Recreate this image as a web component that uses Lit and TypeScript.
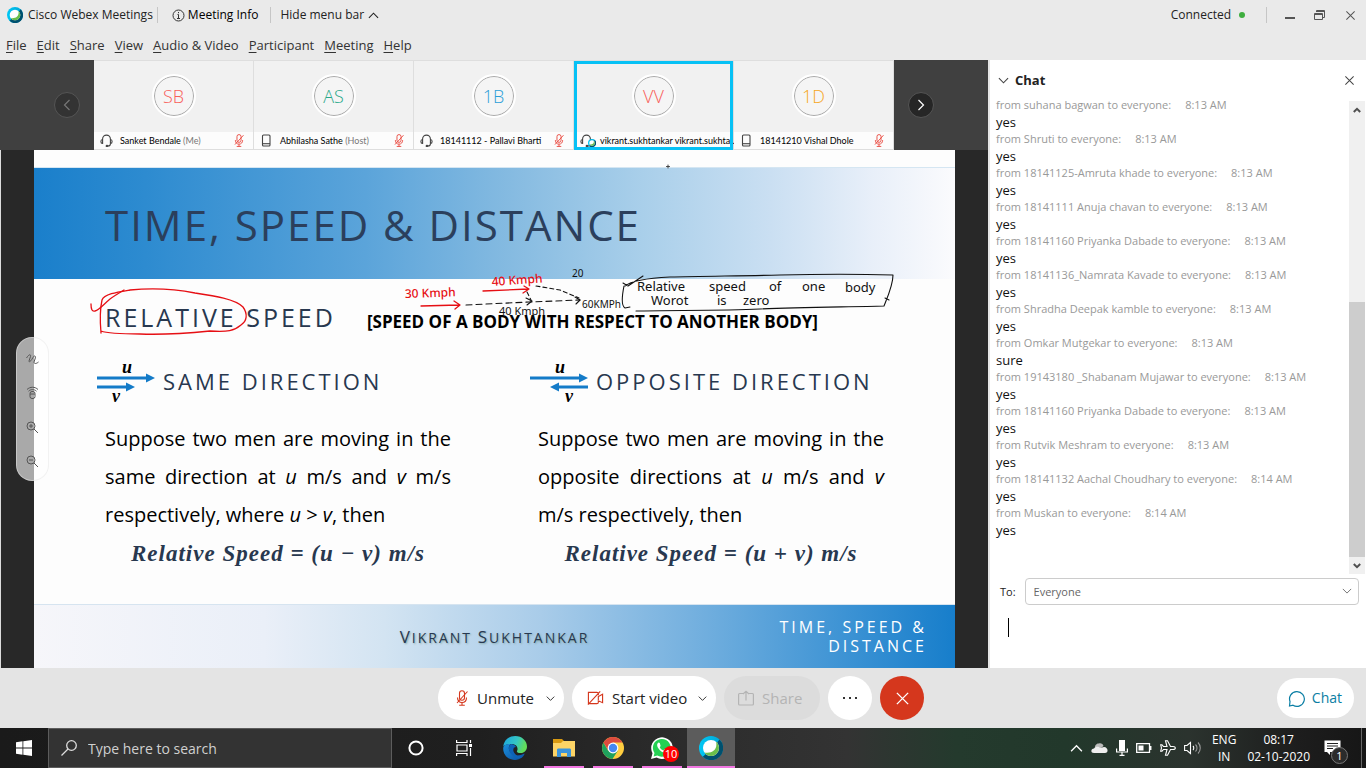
import { LitElement, html, css, svg, nothing } from "lit";
import { customElement, property } from "lit/decorators.js";

const UI = css`"Open Sans", "Noto Sans", sans-serif`;

const base = css`
  * { box-sizing: border-box; }
  button, input, select, textarea {
    font: inherit; color: inherit; background: none; border: 0; padding: 0; margin: 0; outline: 0;
  }
  button { display: flex; align-items: center; white-space: nowrap; }
  svg { display: block; flex: none; }
  p, h1, h2, h3, ul { margin: 0; padding: 0; font-weight: 400; list-style: none; }
`;

const webexLogo = (size: number, id: string) => svg`
  <svg width=${size} height=${size} viewBox="0 0 24 24" aria-hidden="true">
    <defs>
      <linearGradient id="${id}a" x1="0" y1="0" x2="1" y2="0">
        <stop offset="0" stop-color="#00c8f5"/><stop offset="1" stop-color="#00a5d6"/>
      </linearGradient>
      <clipPath id="${id}c"><circle cx="12" cy="12" r="8"/></clipPath>
    </defs>
    <circle cx="12" cy="12" r="12" fill="url(#${id}a)"/>
    <path d="M20.5 3.5A12 12 0 0 1 3.8 20.8L8 17 17.6 7Z" fill="#00506e"/>
    <circle cx="12" cy="12" r="8" fill="#fff"/>
    <g clip-path="url(#${id}c)">
      <path d="M17 5.5C19 14 13 18 5 16.5L8 22 22 22 22 5Z" fill="#6abf4b"/>
    </g>
  </svg>`;

const chevron = (dir: string, w = 12) => {
  const d: Record<string, string> = {
    up: "M1 8.500 6 3.500 11 8.500", down: "M1 3.500 6 8.500 11 3.500",
    left: "M8.500 1 3.500 6 8.500 11", right: "M3.500 1 8.500 6 3.500 11",
  };
  return svg`<svg width=${w} height=${w} viewBox="0 0 12 12" fill="none" stroke="currentColor" stroke-width="1.2" aria-hidden="true"><path d=${d[dir]}/></svg>`;
};

const cross = (w: number) => svg`<svg width=${w} height=${w} viewBox="0 0 12 12" fill="none" stroke="currentColor" stroke-width="1.1" aria-hidden="true"><path d="M1.500 1.500 10.500 10.500M10.500 1.500 1.500 10.500"/></svg>`;

const mutedMic = (w: number, h: number) => svg`
  <svg width=${w} height=${h} viewBox="0 0 12 16" fill="none" stroke="currentColor" stroke-width="1.100" aria-hidden="true">
    <rect x="3.500" y=".7" width="5" height="9.600" rx="2.500"/>
    <path d="M1.500 7.500c0 3 1.700 5 4.500 5s4.500-2 4.500-5M6 12.500V15.300M3.200 15.300H8.800M11.500 1.500 1 13"/>
  </svg>`;

const headset = svg`
  <svg width="13" height="13" viewBox="0 0 13 13" fill="none" stroke="#444" stroke-width="1.1" aria-hidden="true">
    <path d="M2.600 6V5a3.900 3.900 0 0 1 7.800 0v5c0 1.400-1 2-2.500 2M2.600 5.500C.3 5.500.3 9.500 2.600 9.500ZM10.400 5.500c2.300 0 2.300 4 0 4"/>
    <circle cx="7" cy="12" r=".8" fill="#444"/>
  </svg>`;

const phone = svg`
  <svg width="13" height="13" viewBox="0 0 13 13" fill="none" stroke="#444" stroke-width="1.1" aria-hidden="true">
    <rect x="2.500" y="1" width="7.500" height="11" rx="1"/><path d="M2.500 9.700H10"/>
  </svg>`;

@customElement("title-bar")
class TitleBar extends LitElement {
  static styles = [base, css`
    :host { display: block; background: #eaeaea; font: 12px/30px ${UI}; color: #222; }
    .bar { display: flex; align-items: center; height: 30px; }
    .brand { display: flex; align-items: center; gap: 5px; padding: 0 4px 0 7px; }
    .rule { width: 1px; height: 16px; background: #c6c6c6; }
    .info { gap: 3px; margin: 0 12px 0 14px; color: #000; }
    .hide { gap: 4px; margin-left: 9px; }
    .status { display: flex; align-items: center; gap: 8px; margin-left: auto; padding-right: 21px; }
    .dot { width: 6px; height: 6px; border-radius: 50%; background: #3fae3f; }
    .windows { display: flex; margin: 0 1px 0 8px; color: #555; }
    .win { width: 30px; height: 28px; justify-content: center; }
    .menu { display: flex; align-items: center; gap: 10px; height: 30px; padding-left: 6px; font-size: 13px; line-height: 28px; color: #333; }
    .menu u { text-underline-offset: 2px; }
  `];
  render() {
    const items = [["F", "ile"], ["E", "dit"], ["S", "hare"], ["V", "iew"], ["A", "udio & Video"], ["P", "articipant"], ["M", "eeting"], ["H", "elp"]];
    return html`
      <header class="bar">
        <div class="brand">${webexLogo(16, "t")}<span>Cisco Webex Meetings</span></div>
        <span class="rule"></span>
        <button class="info">
          <svg width="13" height="13" viewBox="0 0 13 13" fill="none" stroke="#333" aria-hidden="true"><circle cx="6.500" cy="6.500" r="5.500"/><path d="M5.500 5.500H6.500V9.500M5 9.500H8M6.500 3V4.200"/></svg>
          Meeting Info</button>
        <span class="rule"></span>
        <button class="hide">Hide menu bar ${chevron("up", 11)}</button>
        <div class="status"><span>Connected</span><span class="dot"></span></div>
        <span class="rule"></span>
        <div class="windows">
          <button class="win" aria-label="Minimize"><svg width="12" height="12" viewBox="0 0 12 12"><path d="M1 8H11V10H1Z" fill="#555"/></svg></button>
          <button class="win" aria-label="Restore"><svg width="12" height="12" viewBox="0 0 12 12" fill="none" stroke="#555"><path d="M.5 4.500H8.500V10.500H.5ZM.5 5.500H8.500M2.500 3V1.500H10.500V8.500H9M2.500 2.500H10.500"/></svg></button>
          <button class="win" aria-label="Close">${cross(11)}</button>
        </div>
      </header>
      <nav class="menu">
        ${items.map(([k, rest]) => html`<button><u>${k}</u>${rest}</button>`)}
      </nav>`;
  }
}

interface Person { initials: string; color: string; name: string; role?: string; device: "headset" | "phone"; muted: boolean; active?: boolean; }

const people: Person[] = [
  { initials: "SB", color: "#f8605a", name: "Sanket Bendale", role: "(Me)", device: "headset", muted: true },
  { initials: "AS", color: "#28a889", name: "Abhilasha Sathe", role: "(Host)", device: "phone", muted: true },
  { initials: "1B", color: "#2b9fd8", name: "18141112 - Pallavi Bharti", device: "headset", muted: true },
  { initials: "VV", color: "#f8605a", name: "vikrant.sukhtankar vikrant.sukhta...", device: "headset", muted: false, active: true },
  { initials: "1D", color: "#f5a61d", name: "18141210 Vishal Dhole", device: "phone", muted: true },
];

@customElement("film-strip")
class FilmStrip extends LitElement {
  static styles = [base, css`
    :host { display: flex; align-items: stretch; justify-content: center; gap: 14px; height: 90px; background: #404040; font: 10px/16px ${UI}; }
    .nav { align-self: center; width: 26px; height: 26px; border-radius: 50%; border: 1px solid #555; background: #262626; color: #fff; justify-content: center; }
    .nav.off { color: #777; background: #333; }
    .tiles { display: flex; }
    .tile { position: relative; width: 160px; display: flex; flex-direction: column; background: #f1f1f1; border: 1px solid #dedede; border-left-width: 0; }
    .pic { flex: 1; display: grid; place-items: center; padding-bottom: 2px; }
    .avatar { width: 40px; height: 40px; border-radius: 50%; border: 1px solid #aaa; outline: 2px solid #fff; display: grid; place-items: center; background: #f5f5f5; font-size: 18px; line-height: 20px; font-weight: 300; }
    .label { display: flex; align-items: center; height: 17px; padding: 0 9px 0 6px; background: #fcfcfc; color: #000; }
    .name { flex: 1; margin-left: 7px; white-space: nowrap; font: 9px/16px Lato, sans-serif; }
    .role { color: #777; }
    .mic { color: #e8453a; }
    .frame { position: absolute; inset: 0 0 -1px; border: 3px solid #07c1f5; }
    .device { position: relative; }
    .badge { position: absolute; left: 8px; top: 5px; }
    .active .label { padding-right: 2px; }
  `];
  render() {
    return html`
      <button class="nav off" aria-label="Previous">${chevron("left")}</button>
      <div class="tiles">
        ${people.map((p) => html`
          <div class="tile ${p.active ? "active" : ""}">
            <div class="pic"><span class="avatar" style="color:${p.color}">${p.initials}</span></div>
            <div class="label">
              <span class="device">${p.device === "phone" ? phone : headset}${p.active ? html`<span class="badge">${webexLogo(8, "b")}</span>` : nothing}</span>
              <span class="name">${p.name} ${p.role ? html`<span class="role">${p.role}</span>` : nothing}</span>
              ${p.muted ? html`<span class="mic">${mutedMic(10, 13)}</span>` : nothing}
            </div>
            ${p.active ? html`<span class="frame"></span>` : nothing}
          </div>`)}
      </div>
      <button class="nav" aria-label="Next">${chevron("right")}</button>`;
  }
}

@customElement("slide-view")
class SlideView extends LitElement {
  static styles = [base, css`
    :host { display: flex; flex: 1; position: relative; background: #282828; padding: 0 33px; border-left: 1px solid #dcdcdc; font-family: ${UI}; }
    .slide { position: relative; flex: 1; display: flex; flex-direction: column; background: #fdfdfd; color: #28384f; }
    .head { margin-top: 17px; height: 112px; padding: 0 71px; display: flex; align-items: center; border-top: 1px solid #d5e6f2;
      background: linear-gradient(90deg, #1a7fcb 0%, #2d8bd0 12%, #5ba4da 36%, #86bbe1 52%, #a9cfea 66%, #cadff2 80%, #e8eff9 91%, #fbfbfd 100%); }
    h1 { font-size: 42px; line-height: 56px; letter-spacing: 2px; color: #2b3f5c; padding-top: 2px; white-space: nowrap; }
    .sub { display: flex; align-items: center; gap: 31px; padding: 19px 0 0 71px; white-space: nowrap; }
    h2 { font-size: 25px; line-height: 38px; letter-spacing: 3px; }
    .note { font-size: 17px; line-height: 22px; font-weight: 700; color: #000; padding-top: 10px; }
    .cols { display: grid; grid-template-columns: 1fr 1fr; column-gap: 79px; padding: 23px 71px 0 63px; }
    .col { min-width: 0; padding-left: 8px; }
    .title { display: flex; align-items: center; gap: 8px; margin-left: -8px; }
    h3 { font-size: 22px; line-height: 38px; letter-spacing: 3px; white-space: nowrap; }
    .arrows { width: 58px; font: italic 700 18px/20px "Liberation Serif", serif; color: #000; }
    .arrows svg { overflow: visible; }
    .text { font-size: 20px; line-height: 38px; color: #000; text-align: justify; padding-top: 17px; }
    .math { font: italic 700 23px/40px "Liberation Serif", serif; letter-spacing: 1px; text-align: center; white-space: nowrap; }
    .foot { margin-top: auto; height: 64px; display: grid; grid-template-columns: 1fr auto 1fr; align-items: center; padding: 0 28px; border-top: 1px solid #d6e4f0;
      background: linear-gradient(90deg, #f6f6fa 0%, #eaeff8 25%, #d3e4f2 38%, #a9cce9 55%, #70aede 73%, #3d93d4 88%, #177ecb 100%); }
    .author { grid-column: 2; font-size: 14px; letter-spacing: 2px; text-transform: uppercase; text-shadow: 1px 1px 2px #8aa; }
    .initial { font-size: 17px; }
    .deck { font-size: 16px; line-height: 19px; letter-spacing: 3px; color: #fff; text-align: right; padding-left: 100px; }
    .ink { position: absolute; inset: 0; width: 100%; height: 100%; font-family: "Noto Sans", sans-serif; }
    .tools { position: absolute; left: 15px; top: 187px; width: 33px; height: 144px; border-radius: 16px; background: rgba(255,255,255,.6); border: 1px solid rgba(230,230,230,.5); display: flex; flex-direction: column; justify-content: space-around; align-items: center; padding: 4px 0 1px; color: #555; }
  `];
  arrows(opposite: boolean) {
    return html`<div class="arrows">${svg`
      <svg width="58" height="44" viewBox="0 0 58 44" aria-hidden="true">
        <g stroke="#147bc8" stroke-width="3"><path d="M0 19H50"/>${opposite ? svg`<path d="M28 28H58"/>` : svg`<path d="M0 28H30"/>`}</g>
        <g fill="#147bc8"><path d="M49 14.500 58 19 49 23.500Z"/>${opposite ? svg`<path d="M29 23.500 20 28 29 32.500Z"/>` : svg`<path d="M29 23.500 38 28 29 32.500Z"/>`}</g>
        <g font-size="18"><text x="25" y="14">u</text><text x=${opposite ? 35 : 15} y="43">v</text></g>
      </svg>`}</div>`;
  }
  render() {
    return html`
      <article class="slide">
        <header class="head"><h1>TIME, SPEED &amp; DISTANCE</h1></header>
        <div class="sub"><h2>RELATIVE SPEED</h2><p class="note">[SPEED OF A BODY WITH RESPECT TO ANOTHER BODY]</p></div>
        <div class="cols">
          <section class="col">
            <div class="title">${this.arrows(false)}<h3>SAME DIRECTION</h3></div>
            <p class="text">Suppose two men are moving in the same direction at <i>u</i> m/s and <i>v</i> m/s respectively, where <i>u</i> &gt; <i>v</i>, then</p>
            <p class="math">Relative Speed = (u − v) m/s</p>
          </section>
          <section class="col">
            <div class="title">${this.arrows(true)}<h3>OPPOSITE DIRECTION</h3></div>
            <p class="text">Suppose two men are moving in the opposite directions at <i>u</i> m/s and <i>v</i> m/s respectively, then</p>
            <p class="math">Relative Speed = (u + v) m/s</p>
          </section>
        </div>
        <footer class="foot"><span class="author"><span class="initial">V</span>ikrant <span class="initial">S</span>ukhtankar</span><span class="deck">TIME, SPEED &amp; DISTANCE</span></footer>
        <svg class="ink" viewBox="34 150 921 518" fill="none" stroke-linecap="round" stroke-linejoin="round">
          <g stroke="#e60f14" stroke-width="1.300">
            <path d="M91 304C91 309 92 312 95 311 99 310 103 305 110 299 114 296 119 293 124 290"/>
            <path d="M101 333C100 322 100 309 102 300 104 294 118 292 130 290 150 288 175 289 195 293 215 296 235 299 243 307 248 314 247 321 241 325 234 331 228 332 210 331 190 333 165 335 140 334 120 334 106 333 101 331"/>
            <path d="M421 306 459 305M454 301 460 305 455 309M483 291 528 289M524 286 529 289 523 293"/>
          </g>
          <g stroke="#111" stroke-width="1.100">
            <path d="M466 305 529 302 580 300" stroke-dasharray="6 4"/>
            <path d="M536 286 560 290 579 298M527 292 531 300" stroke-dasharray="4 3"/>
            <path d="M526 298 532 301 527 305M575 297 580 300 576 304"/>
            <path d="M623 283 628 286 643 276M625 286C632 280 650 278 670 277 700 276 740 276 780 275 820 274 860 274 893 275 893 285 888 296 884 306 850 307 800 307 760 309 720 311 670 310 636 311M624 286C622 296 621 306 625 308L630 307M885 298 889 300"/>
          </g>
          <path d="M668 165V168M666.500 166.500H669.500" stroke="#444"/>
          <g fill="#e60f14" font-size="12" font-weight="500">
            <text x="405" y="298" transform="rotate(-2 405 298)">30 Kmph</text>
            <text x="492" y="286" transform="rotate(-4 492 286)">40 Kmph</text>
          </g>
          <g fill="#111" font-size="10">
            <text x="572" y="277">20</text><text x="582" y="308">60KMPh</text>
            <g font-size="11"><text x="499" y="315">40 Kmph</text></g>
            <g font-size="13">
              <text x="637" y="291">Relative</text><text x="709" y="291">speed</text><text x="769" y="291">of</text>
              <text x="802" y="291">one</text><text x="845" y="292">body</text>
              <text x="651" y="305">Worot</text><text x="717" y="305">is</text><text x="743" y="305">zero</text>
            </g>
          </g>
        </svg>
      </article>
      <div class="tools">
        <button aria-label="Annotate"><svg width="13" height="12" viewBox="0 0 13 12" fill="none" stroke="currentColor"><path d="M.5 5C3 1 5 1 4.500 3.500L3 8C3 10 5 8 7 4.500S10 4 9 6L8 9C8 11 10 11 12.500 9"/></svg></button>
        <button aria-label="Pointer"><svg width="13" height="13" viewBox="0 0 13 13" fill="none" stroke="currentColor"><path d="M1 3.500C4 .5 9 .5 12 3.500M2.500 5.200C5 3 8 3 10.500 5.200"/><rect x="4" y="5.500" width="5" height="7" rx="2"/><path d="M4 8H9"/></svg></button>
        <button aria-label="Zoom in"><svg width="13" height="13" viewBox="0 0 13 13" fill="none" stroke="currentColor"><circle cx="5" cy="5" r="4"/><path d="M8 8 12 12M3 5H7M5 3V7"/></svg></button>
        <button aria-label="Zoom out"><svg width="13" height="13" viewBox="0 0 13 13" fill="none" stroke="currentColor"><circle cx="5" cy="5" r="4"/><path d="M8 8 12 12M3 5H7"/></svg></button>
      </div>`;
  }
}

const messages: [string, string, string][] = [
  ["suhana bagwan", "8:13 AM", "yes"], ["Shruti", "8:13 AM", "yes"], ["18141125-Amruta khade", "8:13 AM", "yes"],
  ["18141111 Anuja chavan", "8:13 AM", "yes"], ["18141160 Priyanka Dabade", "8:13 AM", "yes"],
  ["18141136_Namrata Kavade", "8:13 AM", "yes"], ["Shradha Deepak kamble", "8:13 AM", "yes"],
  ["Omkar Mutgekar", "8:13 AM", "sure"], ["19143180 _Shabanam Mujawar", "8:13 AM", "yes"],
  ["18141160 Priyanka Dabade", "8:13 AM", "yes"], ["Rutvik Meshram", "8:13 AM", "yes"],
  ["18141132 Aachal Choudhary", "8:14 AM", "yes"], ["Muskan", "8:14 AM", "yes"],
];

@customElement("chat-panel")
class ChatPanel extends LitElement {
  static styles = [base, css`
    :host { display: flex; flex-direction: column; min-height: 0; background: #fff; border-left: 2px solid #e6e6e6; font: 12px/17px ${UI}; color: #222; }
    .head { display: flex; align-items: center; gap: 6px; height: 41px; padding: 0 11px 0 8px; color: #444; }
    h2 { flex: 1; font-size: 13px; font-weight: 700; color: #222; }
    .body { flex: 1; min-height: 0; display: flex; padding-right: 1px; }
    .list { flex: 1; min-height: 0; display: flex; flex-direction: column; justify-content: flex-end; overflow: hidden; padding: 0 0 35px 6px; white-space: nowrap; }
    .from { font-size: 11px; line-height: 16px; color: #999; }
    .time { margin-left: 14px; }
    .msg { font-size: 13px; line-height: 18px; color: #111; }
    .bar { width: 16px; display: flex; flex-direction: column; background: #f0f0f0; color: #555; }
    .bar button { height: 17px; justify-content: center; }
    .track { flex: 1; display: flex; flex-direction: column; justify-content: flex-end; }
    .thumb { height: 58%; background: #cdcdcd; }
    .to { display: flex; align-items: center; gap: 9px; padding: 4px 7px 0 10px; font-size: 11px; }
    .pick { position: relative; flex: 1; }
    select { appearance: none; width: 100%; height: 27px; padding: 0 8px; border: 1px solid #ccc; border-radius: 4px; color: #666; font-size: 11px; }
    .pick svg { position: absolute; right: 7px; top: 8px; color: #777; pointer-events: none; }
    .write { display: flex; height: 63px; padding: 13px 6px 0 18px; }
    .caret { width: 1px; height: 19px; background: #000; }
    textarea { flex: 1; resize: none; height: 44px; }
  `];
  render() {
    return html`
      <header class="head">${chevron("down", 11)}<h2>Chat</h2><button aria-label="Close chat">${cross(11)}</button></header>
      <div class="body">
        <ul class="list">
          ${messages.map(([who, time, text]) => html`<li><p class="from">from ${who} to everyone:<span class="time">${time}</span></p><p class="msg">${text}</p></li>`)}
        </ul>
        <div class="bar">
          <button aria-label="Scroll up"><svg width="8" height="6" viewBox="0 0 8 6" fill="none" stroke="#505050" stroke-width="2"><path d="M.8 5 4 1.800 7.200 5"/></svg></button>
          <div class="track"><div class="thumb"></div></div>
          <button aria-label="Scroll down"><svg width="8" height="6" viewBox="0 0 8 6" fill="none" stroke="#505050" stroke-width="2"><path d="M.8 1 4 4.200 7.200 1"/></svg></button>
        </div>
      </div>
      <div class="to"><label for="to">To:</label><div class="pick"><select id="to"><option>Everyone</option></select>${chevron("down", 10)}</div></div>
      <div class="write"><span class="caret"></span><textarea aria-label="Message"></textarea></div>`;
  }
}

@customElement("call-bar")
class CallBar extends LitElement {
  static styles = [base, css`
    :host { display: grid; grid-template-columns: 1fr auto 1fr; align-items: center; height: 60px; padding: 0 12px 0 8px; background: #e4e4e4; font: 15px/20px ${UI}; color: #222; }
    .group { grid-column: 2; display: flex; gap: 8px; }
    .pill { height: 44px; border-radius: 22px; background: #fff; }
    .mute { width: 126px; padding: 0 9px 0 17px; }
    .video { width: 144px; padding: 0 9px 0 15px; }
    .share { width: 96px; padding: 0 14px; gap: 8px; background: #dcdcdc; color: #b4b4b4; }
    .round { width: 44px; justify-content: center; }
    .leave { background: #d5371d; color: #fff; }
    .red { color: #d5371d; margin-right: 8px; }
    .cap { flex: 1; text-align: left; }
    .chat { justify-self: end; height: 40px; padding: 0 12px 0 11px; gap: 7px; border-radius: 20px; background: #fff; color: #0a7ea4; font-size: 14px; }
  `];
  render() {
    return html`
      <div class="group">
        <button class="pill mute"><span class="red">${mutedMic(14, 16)}</span><span class="cap">Unmute</span>${chevron("down", 9)}</button>
        <button class="pill video"><span class="red"><svg width="17" height="16" viewBox="0 0 18 16" fill="none" stroke="currentColor" stroke-width="1.200"><path d="M12 5V3.500C12 2.500 11.500 2 10.500 2H1.500V14H10.500C11.500 14 12 13.500 12 12.500V11L16.500 13V4L12 6.500V10M1 15 14 1"/></svg></span><span class="cap">Start video</span>${chevron("down", 9)}</button>
        <button class="pill share" disabled><svg width="16" height="16" viewBox="0 0 16 16" fill="none" stroke="currentColor" stroke-width="1.200"><path d="M5 3.500H1.500C1 3.500.6 4 .6 4.500V14C.6 14.600 1 15 1.500 15H14.500C15 15 15.400 14.600 15.400 14V4.500C15.400 4 15 3.500 14.500 3.500H11M8 10.500V1.500M5 4 8 1.200 11 4"/></svg>Share</button>
        <button class="pill round" aria-label="More"><svg width="14" height="4" viewBox="0 0 14 4" fill="#333"><rect y="1" width="2" height="2"/><rect x="6" y="1" width="2" height="2"/><rect x="12" y="1" width="2" height="2"/></svg></button>
        <button class="pill round leave" aria-label="Leave meeting">${cross(15)}</button>
      </div>
      <button class="chat"><svg width="17" height="17" viewBox="0 0 17 17" fill="none" stroke="currentColor" stroke-width="1.200"><path d="M1.500 16 2 11.500A7.400 7.400 0 1 1 5 15.200Z"/></svg>Chat</button>`;
  }
}

@customElement("task-bar")
class TaskBar extends LitElement {
  static styles = [base, css`
    :host { display: flex; height: 40px; font: 12px/17px ${UI}; color: #fff;
      background: linear-gradient(90deg, #1a1a1a 0%, #1f1f1f 35%, #2c2c2c 50%, #333 62%, #243a2d 70%, #22382b 78%, #2b332e 87%, #1d1d1d 95%, #161616 100%); }
    .cell { width: 48px; justify-content: center; }
    .search { display: flex; align-items: center; gap: 11px; width: 344px; padding-left: 12px; background: #333; border: 1px solid #5c5c5c; }
    input { flex: 1; font-size: 14px; min-width: 0; }
    input::placeholder { color: #d0d0d0; opacity: 1; }
    .apps { display: flex; gap: 1px; margin-left: 3px; }
    .app { position: relative; width: 48px; justify-content: center; }
    .run::after { content: ""; position: absolute; left: 4px; right: 4px; bottom: 0; height: 2px; background: #f277e2; }
    .on { background: #5c5c5c; }
    .on::after { left: 0; right: 0; }
    .count { position: absolute; left: 25px; top: 18px; width: 16px; height: 16px; border-radius: 50%; background: #f00; font-size: 11px; line-height: 16px; text-align: center; }
    .tray { display: flex; align-items: center; gap: 8px; margin-left: auto; }
    .lang, .clock { text-align: center; }
    .lang { margin: 0 3px; }
    .bell { position: relative; margin: 0 12px 0 6px; }
    .num { position: absolute; left: 7px; top: 7px; width: 17px; height: 17px; border-radius: 50%; border: 1px solid #777; background: #2b2b2b; font-size: 11px; line-height: 15px; text-align: center; }
    .peek { align-self: stretch; width: 5px; border-left: 1px solid #666; }
  `];
  @property({ type: Number }) unread = 10;
  render() {
    return html`
      <button class="cell" aria-label="Start"><svg width="16" height="16" viewBox="0 0 16 16" fill="#fff"><path d="M0 2.200 6.500 1.300V7.600H0ZM7.300 1.200 16 0V7.600H7.300ZM0 8.400H6.500V14.700L0 13.800ZM7.300 8.400H16V16L7.300 14.800Z"/></svg></button>
      <label class="search"><svg width="16" height="16" viewBox="0 0 16 16" fill="none" stroke="#ddd" stroke-width="1.300"><circle cx="10.500" cy="5.500" r="4.800"/><path d="M7 9 .5 15.500"/></svg><input aria-label="Search" placeholder="Type here to search"></label>
      <button class="cell" aria-label="Cortana"><svg width="16" height="16" viewBox="0 0 16 16"><circle cx="8" cy="8" r="6.600" fill="none" stroke="#fff" stroke-width="2"/></svg></button>
      <button class="cell" aria-label="Task view"><svg width="17" height="16" viewBox="0 0 17 16" fill="none" stroke="#fff" stroke-width="1.200"><path d="M.6 0V2.500H11V0M1 5H11V11H1ZM.6 16V13.500H11V16M14.500 0V3M14.500 8V16"/><path d="M13 4H16V7H13Z" fill="#fff" stroke="none"/></svg></button>
      <div class="apps">
        <button class="app" aria-label="Edge"><svg width="24" height="24" viewBox="0 0 24 24">
          <defs><linearGradient id="e1" x1="0" y1="0" x2="1" y2=".3"><stop offset="0" stop-color="#1aa4e0"/><stop offset=".6" stop-color="#35c6c4"/><stop offset="1" stop-color="#62dd5a"/></linearGradient>
          <linearGradient id="e2" x1="0" y1="0" x2="1" y2="1"><stop offset="0" stop-color="#1b8fdc"/><stop offset="1" stop-color="#0b4fa0"/></linearGradient></defs>
          <path d="M.3 10.500C1 4 6 0 12.200 0 19 0 24 5 24 10.500 24 14.500 21 17 18 17 15 17 13.500 16 14 15 15.500 12.500 14 8 8.500 8 5 8 2 9 .3 10.500Z" fill="url(#e1)"/>
          <path d="M.2 12C.5 9 4 7.500 8 8 5 10 5 14 8.500 17.500 11 20 17 20 21.500 17.500 21.500 20 17 24 12 24 5 24 0 18.500 .2 12Z" fill="url(#e2)"/>
          <path d="M8 8C5 10 5 15 9 19 12 22 17 23 19.500 20.500 15 21.500 11 18 10.300 14.500 10 12 11.500 11 13 11 12 9 10 8 8 8Z" fill="#0d62b8"/></svg></button>
        <button class="app run" aria-label="File Explorer"><svg width="22" height="18" viewBox="0 0 22 18"><path d="M0 0H9L11 2H21V5H0Z" fill="#d99a12"/><path d="M0 4H8L10 2H22V17.500H0Z" fill="#fdd466"/><path d="M4 18V11C4 10 4.500 9.500 5.500 9.500H16.500C17.500 9.500 18 10 18 11V18H14V14H8V18Z" fill="#3b94dc"/></svg></button>
        <button class="app run" aria-label="Chrome"><svg width="22" height="22" viewBox="0 0 22 22"><circle cx="11" cy="11" r="11" fill="#ffcd40"/><path d="M11 11 1.500 5.500A11 11 0 0 1 20.500 5.500H11Z" fill="#dd4b3e"/><path d="M1.500 5.500A11 11 0 0 0 10.500 22L15.800 13.700 11 11 6.200 13.700Z" fill="#1fa15d"/><path d="M1.500 5.500 6.300 13.500 11 5.500Z" fill="#dd4b3e"/><circle cx="11" cy="11" r="5.400" fill="#fff"/><circle cx="11" cy="11" r="4.200" fill="#4688f1"/></svg></button>
        <button class="app run" aria-label="WhatsApp"><svg width="22" height="22" viewBox="0 0 22 22"><path d="M0 22 1.500 16.300A10.800 10.800 0 1 1 5.600 20.500Z" fill="#fff"/><path d="M2.600 19.400 3.500 15.900A8.900 8.900 0 1 1 6.300 18.500Z" fill="#25d053"/><path d="M7.500 5.500C6 6.500 5.500 8.500 7.500 11.500 9.500 14.500 12 16 14.500 15.500 16 15 16.500 14 16 13.300L13.500 12.200 12.300 13.500C10.500 12.800 9.500 11.800 8.800 10.300L9.600 9 8.800 6Z" fill="#fff"/></svg><span class="count">${this.unread}</span></button>
        <button class="app run on" aria-label="Webex">${webexLogo(24, "w")}</button>
      </div>
      <div class="tray">
        ${chevron("up", 13)}
        <svg width="17" height="12" viewBox="0 0 17 12"><path d="M4 8C3 3 6 1 8 1.500 10 1 12 2 12.500 4L6 9Z" fill="#bbb"/><path d="M3 11C-1 11 0 6.500 3 6.500 5 4 8 4.500 9 6L13 5C17 5 18 11 14 11Z" fill="#eee"/></svg>
        <svg width="12" height="16" viewBox="0 0 12 16"><rect x="3" width="6" height="11" fill="#fff"/><path d="M.6 8.500V12H11.400V8.500M6 12V15.300M3.500 15.300H8.500" fill="none" stroke="#fff" stroke-width="1.200"/></svg>
        <svg width="16" height="10" viewBox="0 0 16 10"><path d="M.7.700H13.500V9.300H.7ZM14.800 3V7" fill="none" stroke="#fff" stroke-width="1.300"/><rect x="2.500" y="2.500" width="5" height="5" fill="#fff"/></svg>
        <svg width="16" height="16" viewBox="0 0 16 16" fill="none" stroke="#fff" stroke-width="1.100"><path d="M15.300 8C15.300 7 14 6.500 13 6.500H10.500L7.500.700H5.500L7 6.500H3.500L2 4.800H.7L1.500 8 .7 11.200H2L3.500 9.500H7L5.500 15.300H7.500L10.500 9.500H13C14 9.500 15.300 9 15.300 8Z"/></svg>
        <svg width="17" height="14" viewBox="0 0 17 14" fill="none" stroke="#fff" stroke-width="1.100"><path d="M.6 4.500H3L6.500 1.500V12.500L3 9.500H.6Z"/><path d="M9 5C10 6 10 8 9 9"/><path d="M11.500 3.500C13.500 5.500 13.500 8.500 11.500 10.500M14 1.500C17 4.500 17 9.500 14 12.500" stroke="#999"/></svg>
        <div class="lang">ENG<br>IN</div>
        <div class="clock">08:17<br>02-10-2020</div>
        <div class="bell"><svg width="17" height="16" viewBox="0 0 17 16"><path d="M.5.500H16.500V12H6V15L3 12H.5Z" fill="#fff"/><path d="M3 3.500H14M3 6H14M3 8.500H9" stroke="#222"/></svg><span class="num">1</span></div>
        <span class="peek"></span>
      </div>`;
  }
}

@customElement("app-root")
class AppRoot extends LitElement {
  static styles = [base, css`
    :host { display: flex; flex-direction: column; height: 100vh; overflow: hidden; background: #eaeaea; }
    .main { flex: 1; min-height: 0; display: grid; grid-template-columns: minmax(0, 1fr) 378px; grid-template-rows: minmax(0, 1fr); }
    .left { display: flex; flex-direction: column; min-width: 0; }
  `];
  render() {
    return html`
      <title-bar></title-bar>
      <main class="main">
        <div class="left"><film-strip></film-strip><slide-view></slide-view></div>
        <chat-panel></chat-panel>
      </main>
      <call-bar></call-bar>
      <task-bar></task-bar>`;
  }
}
